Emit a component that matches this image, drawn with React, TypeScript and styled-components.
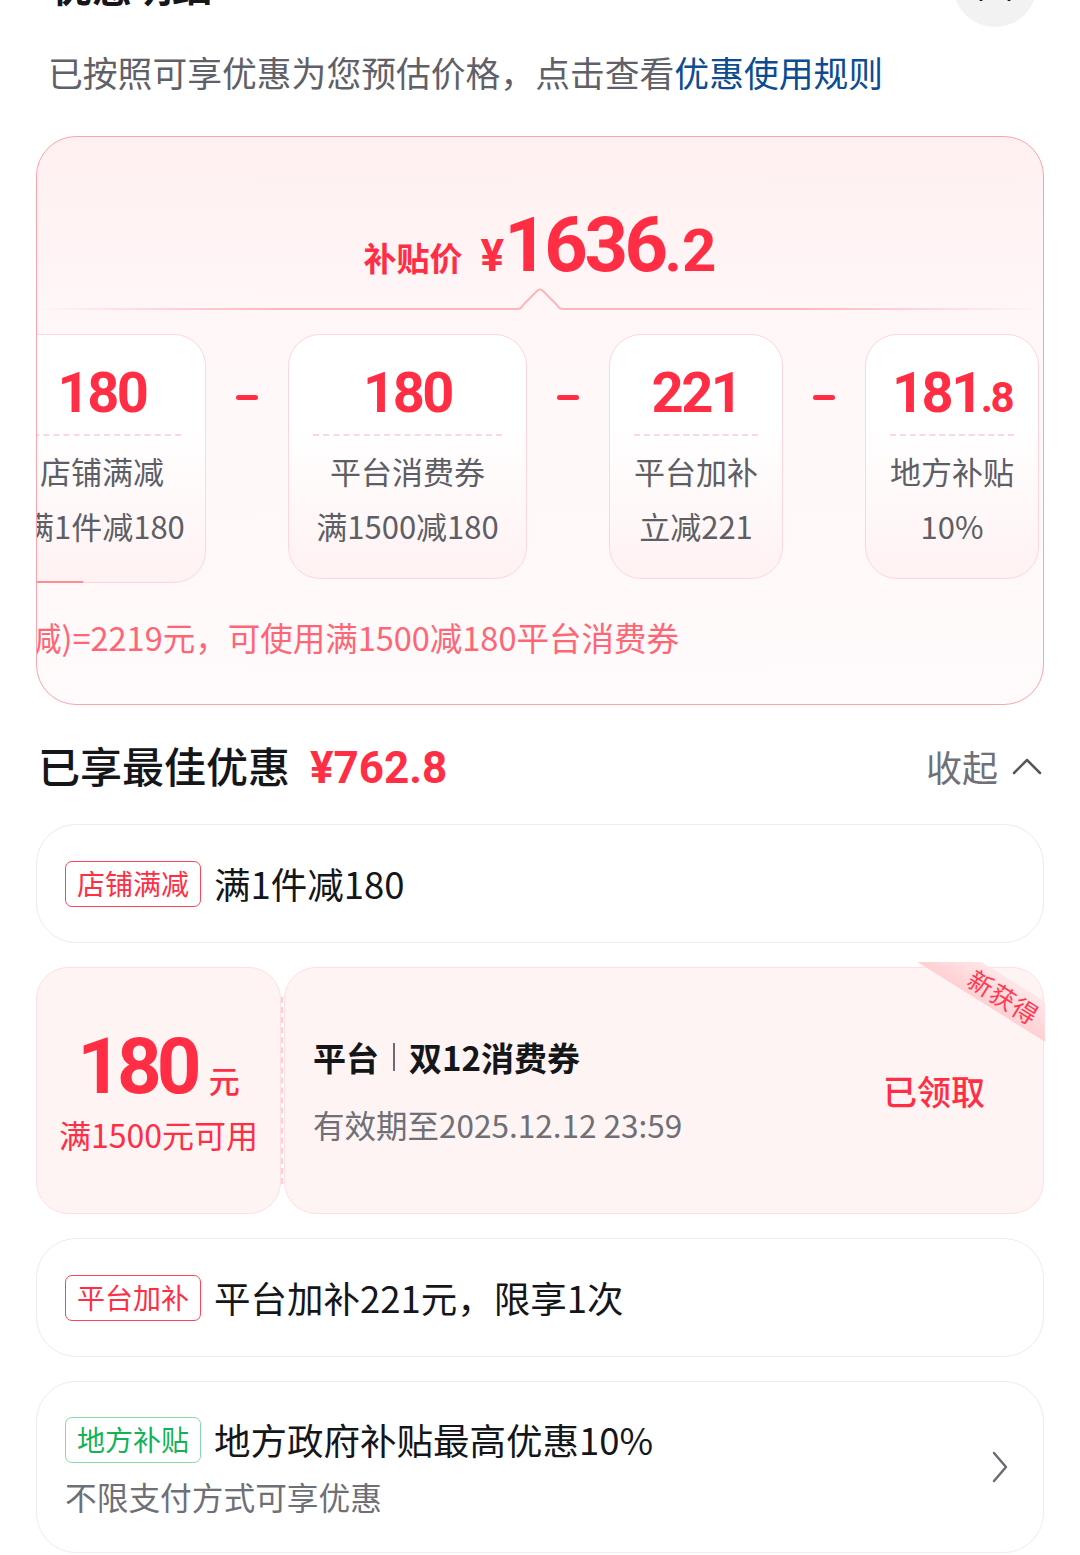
import React from 'react'
import styled, { createGlobalStyle } from 'styled-components'

const RED = '#ff2e45'
const CJK = `"Noto Sans CJK SC", "Noto Sans", sans-serif`
const NUM = `Roboto, "Noto Sans CJK SC", sans-serif`

const GlobalStyle = createGlobalStyle`
  html, body { margin: 0; padding: 0; background: #fff; }
  body { font-family: ${CJK}; color: #16171b; overflow: hidden; }
  * { box-sizing: border-box; }
`

const Page = styled.div`
  width: 1080px;
  height: 1555px;
  overflow: hidden;
  padding: 0 36px;
`

const Header = styled.div`
  display: flex;
  align-items: center;
  justify-content: space-between;
  height: 84px;
  margin-top: -57px;
  padding: 0 7px 0 16px;
`

const Title = styled.div`
  font-size: 40px;
  font-weight: 700;
  line-height: 56px;
  color: #16171b;
`

const CloseBtn = styled.div`
  width: 84px;
  height: 84px;
  border-radius: 50%;
  background: #f2f2f2;
  display: flex;
  align-items: center;
  justify-content: center;
`

const Subtitle = styled.p`
  margin: 22px 0 0;
  padding-left: 12px;
  font-size: 34.8px;
  line-height: 46px;
  color: #5f6068;
  white-space: nowrap;
  a { color: #0b4c92; text-decoration: none; }
`

const MainCard = styled.div`
  margin-top: 41px;
  border: 1.5px solid #ffa3ab;
  border-radius: 40px;
  background: linear-gradient(180deg, #fff0f1 0%, #fff7f8 35%, #fffafb 100%);
  overflow: hidden;
  padding-bottom: 45px;
`

const PriceRow = styled.div`
  display: flex;
  align-items: baseline;
  justify-content: center;
  padding-top: 70px;
  color: ${RED};
  line-height: 1;
`

const PriceLabel = styled.span`
  font-size: 33px;
  font-weight: 700;
  margin-right: 18px;
`

const PriceNum = styled.span<{ $size: number; $ls?: number }>`
  font-family: ${NUM};
  font-weight: 700;
  font-size: ${p => p.$size}px;
  letter-spacing: ${p => p.$ls ?? 0}px;
`

const Divider = styled.svg`
  display: block;
  margin-top: 4px;
`

const CardsRow = styled.div`
  margin-top: 23px;
  overflow: hidden;
`

const Track = styled.div`
  display: flex;
  align-items: flex-start;
  margin-left: -39px;
`

const DealCard = styled.div<{ $w: number; $first?: boolean }>`
  position: relative;
  flex-shrink: 0;
  width: ${p => p.$w}px;
  height: ${p => (p.$first ? 249 : 245)}px;
  border: 1.5px solid #ffd7db;
  border-radius: 32px;
  background: linear-gradient(180deg, #fff 0%, #fff 38%, #fff2f3 100%);
  padding: 28px 24px 0;
  text-align: center;
  &::after {
    content: '';
    display: ${p => (p.$first ? 'block' : 'none')};
    position: absolute;
    left: 0;
    bottom: -1.5px;
    width: 84px;
    height: 2.5px;
    background: #ff8c96;
  }
`

const DealNum = styled.div`
  font-family: ${NUM};
  font-weight: 700;
  font-size: 56px;
  line-height: 60px;
  height: 60px;
  color: ${RED};
  letter-spacing: -2.5px;
  white-space: nowrap;
  small { font-size: 42px; line-height: 1; }
`

const Dashed = styled.div`
  margin-top: 11px;
  border-top: 2px dashed #ffd6da;
`

const DealLabel = styled.div<{ $gap: number }>`
  margin-top: ${p => p.$gap}px;
  font-size: 31px;
  line-height: 42px;
  color: #5d5e66;
  white-space: nowrap;
`

const Minus = styled.div`
  flex-shrink: 0;
  width: 22px;
  height: 5px;
  border-radius: 3px;
  background: ${RED};
  margin: 61px 30px 0;
`

const Formula = styled.div`
  margin-top: 32px;
  font-size: 32.5px;
  line-height: 44px;
  color: #ff6675;
  white-space: nowrap;
  overflow: hidden;
  span { display: inline-block; margin-left: -8px; }
`

const SectionHead = styled.div`
  margin-top: 33px;
  height: 56px;
  display: flex;
  align-items: center;
  justify-content: space-between;
  padding-right: 2px;
`

const SectionTitle = styled.div`
  font-size: 42px;
  font-weight: 500;
  line-height: 56px;
  color: #15161a;
  padding-left: 2px;
`

const SavedPrice = styled.span`
  font-family: ${NUM};
  font-weight: 700;
  font-size: 44px;
  color: ${RED};
  margin-left: 20px;
`

const Collapse = styled.div`
  display: flex;
  align-items: center;
  gap: 14px;
  font-size: 36px;
  color: #6f7078;
`

const Panel = styled.div<{ $gap?: number }>`
  margin-top: ${p => p.$gap ?? 24}px;
  border: 1.5px solid #ececec;
  border-radius: 40px;
  background: #fff;
`

const PanelRow = styled(Panel)`
  min-height: 119px;
  display: flex;
  align-items: center;
  padding: 0 28px;
`

const Tag = styled.span<{ $tone: 'red' | 'green' }>`
  flex-shrink: 0;
  height: 46px;
  padding: 0 11px;
  border-radius: 7px;
  border: 1.5px solid ${p => (p.$tone === 'red' ? '#ff4457' : '#86dca8')};
  color: ${p => (p.$tone === 'red' ? RED : '#12b257')};
  font-size: 28px;
  line-height: 43px;
`

const RowText = styled.span`
  margin-left: 13px;
  font-size: 36.5px;
  line-height: 48px;
  color: #15161a;
`

const Coupon = styled.div`
  margin-top: 24px;
  display: flex;
  height: 247px;
`

const CouponLeft = styled.div`
  width: 245px;
  flex-shrink: 0;
  border: 1.5px solid #ffe0e2;
  border-radius: 32px;
  background: #fff4f4;
  display: flex;
  flex-direction: column;
  align-items: center;
  justify-content: center;
  color: ${RED};
`

const Amount = styled.div`
  display: flex;
  align-items: baseline;
  line-height: 84px;
  b {
    font-family: ${NUM};
    font-weight: 700;
    font-size: 78px;
    letter-spacing: -5px;
  }
  span {
    font-size: 31px;
    font-weight: 500;
    margin-left: 12px;
  }
`

const Cond = styled.div`
  margin-top: -10px;
  font-size: 32px;
  line-height: 44px;
`

const DashLine = styled.div`
  width: 3px;
  flex-shrink: 0;
  margin: 30px 0;
  border-left: 2px dashed #ffcdd2;
`

const CouponRight = styled.div`
  position: relative;
  flex: 1;
  border: 1.5px solid #ffe0e2;
  border-radius: 32px;
  background: #fff4f4;
  display: flex;
  align-items: center;
  justify-content: space-between;
  padding: 0 58px 0 28px;
`

const CouponInfo = styled.div`
  display: flex;
  flex-direction: column;
  gap: 23px;
`

const CouponTitle = styled.div`
  display: flex;
  align-items: center;
  font-size: 33px;
  font-weight: 600;
  line-height: 44px;
  color: #15161a;
  i {
    display: inline-block;
    width: 2px;
    height: 28px;
    background: #6b6c73;
    margin: 0 14px;
  }
`

const CouponDate = styled.div`
  font-size: 31.5px;
  line-height: 44px;
  color: #6e6f77;
`

const Claimed = styled.div`
  font-size: 34px;
  font-weight: 500;
  color: ${RED};
`

const RibbonClip = styled.div`
  position: absolute;
  top: -6px;
  right: -2px;
  width: 140px;
  height: 100px;
  overflow: hidden;
  pointer-events: none;
`

const Ribbon = styled.div`
  position: absolute;
  left: -6px;
  top: 14px;
  width: 200px;
  height: 34px;
  transform: rotate(32deg);
  background: linear-gradient(180deg, #ffe6e8 0%, #ffd0d4 100%);
  color: #ff3a50;
  font-size: 25px;
  line-height: 34px;
  text-align: center;
  letter-spacing: 1px;
  padding-left: 12px;
`

const LocalPanel = styled(Panel)`
  display: flex;
  align-items: center;
  padding: 34px 34px 35px 28px;
`

const LocalBody = styled.div`
  flex: 1;
`

const LocalLine = styled.div`
  display: flex;
  align-items: center;
`

const LocalSub = styled.div`
  margin-top: 11px;
  font-size: 31.7px;
  line-height: 42px;
  color: #6e6f77;
`

type Deal = { w: number; num: React.ReactNode; label: string; sub: string }

const deals: Deal[] = [
  { w: 208, num: '180', label: '店铺满减', sub: '满1件减180' },
  { w: 239, num: '180', label: '平台消费券', sub: '满1500减180' },
  { w: 174, num: '221', label: '平台加补', sub: '立减221' },
  { w: 174, num: <>181<small>.8</small></>, label: '地方补贴', sub: '10%' },
]

export default function App() {
  return (
    <>
      <GlobalStyle />
      <Page>
        <Header>
          <Title>优惠明细</Title>
          <CloseBtn>
            <svg width="38" height="38" viewBox="0 0 38 38">
              <path d="M5 5 L33 33 M33 5 L5 33" stroke="#1b1c22" strokeWidth="4" strokeLinecap="round" />
            </svg>
          </CloseBtn>
        </Header>

        <Subtitle>
          已按照可享优惠为您预估价格，点击查看<a>优惠使用规则</a>
        </Subtitle>

        <MainCard>
          <PriceRow>
            <PriceLabel>补贴价</PriceLabel>
            <PriceNum $size={44}>¥</PriceNum>
            <PriceNum $size={76} $ls={-3.5}>1636</PriceNum>
            <PriceNum $size={60}>.2</PriceNum>
          </PriceRow>

          <Divider width="1005" height="24" viewBox="0 0 1005 24">
            <defs>
              <linearGradient id="ln" x1="0" x2="1" y1="0" y2="0">
                <stop offset="0" stopColor="#ffb3ba" stopOpacity="0" />
                <stop offset="0.25" stopColor="#ffb3ba" />
                <stop offset="0.75" stopColor="#ffb3ba" />
                <stop offset="1" stopColor="#ffb3ba" stopOpacity="0" />
              </linearGradient>
            </defs>
            <path
              d="M0 22 H480 Q484 22 486 18 L500 4 Q503 1 506 4 L520 18 Q522 22 526 22 H1005"
              fill="none"
              stroke="url(#ln)"
              strokeWidth="2"
            />
          </Divider>

          <CardsRow>
            <Track>
              {deals.map((d, i) => (
                <React.Fragment key={i}>
                  {i > 0 && <Minus />}
                  <DealCard $w={d.w} $first={i === 0}>
                    <DealNum>{d.num}</DealNum>
                    <Dashed />
                    <DealLabel $gap={14}>{d.label}</DealLabel>
                    <DealLabel $gap={13}>{d.sub}</DealLabel>
                  </DealCard>
                </React.Fragment>
              ))}
            </Track>
          </CardsRow>

          <Formula>
            <span>减)=2219元，可使用满1500减180平台消费券</span>
          </Formula>
        </MainCard>

        <SectionHead>
          <SectionTitle>
            已享最佳优惠<SavedPrice>¥762.8</SavedPrice>
          </SectionTitle>
          <Collapse>
            收起
            <svg width="30" height="20" viewBox="0 0 30 20">
              <path d="M2 17 L15 4 L28 17" fill="none" stroke="#55565c" strokeWidth="2.5" strokeLinecap="round" strokeLinejoin="round" />
            </svg>
          </Collapse>
        </SectionHead>

        <PanelRow $gap={30}>
          <Tag $tone="red">店铺满减</Tag>
          <RowText>满1件减180</RowText>
        </PanelRow>

        <Coupon>
          <CouponLeft>
            <Amount>
              <b>180</b>
              <span>元</span>
            </Amount>
            <Cond>满1500元可用</Cond>
          </CouponLeft>
          <DashLine />
          <CouponRight>
            <CouponInfo>
              <CouponTitle>
                平台<i />双12消费券
              </CouponTitle>
              <CouponDate>有效期至2025.12.12 23:59</CouponDate>
            </CouponInfo>
            <Claimed>已领取</Claimed>
            <RibbonClip>
              <Ribbon>新获得</Ribbon>
            </RibbonClip>
          </CouponRight>
        </Coupon>

        <PanelRow>
          <Tag $tone="red">平台加补</Tag>
          <RowText>平台加补221元，限享1次</RowText>
        </PanelRow>

        <LocalPanel>
          <LocalBody>
            <LocalLine>
              <Tag $tone="green">地方补贴</Tag>
              <RowText>地方政府补贴最高优惠10%</RowText>
            </LocalLine>
            <LocalSub>不限支付方式可享优惠</LocalSub>
          </LocalBody>
          <svg width="18" height="34" viewBox="0 0 18 34">
            <path d="M3 3 L15 17 L3 31" fill="none" stroke="#6b6c73" strokeWidth="2.5" strokeLinecap="round" strokeLinejoin="round" />
          </svg>
        </LocalPanel>
      </Page>
    </>
  )
}
